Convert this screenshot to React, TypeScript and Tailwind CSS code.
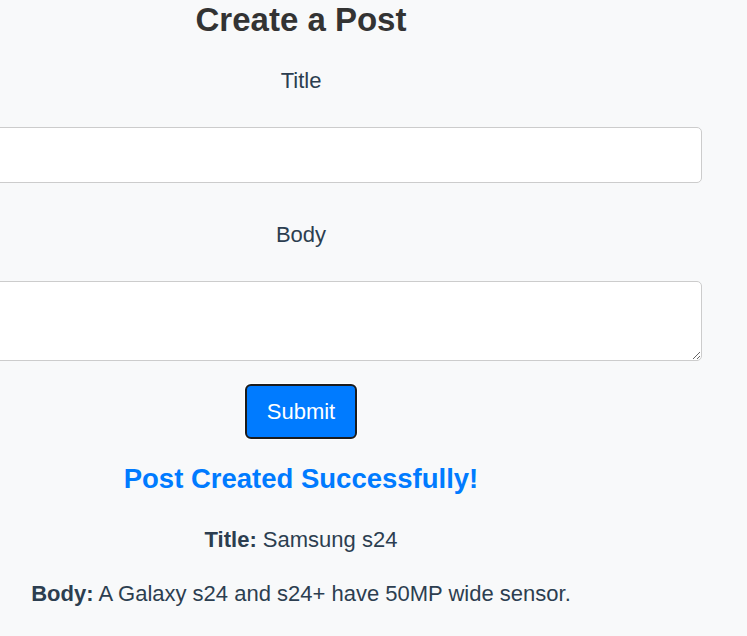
import { useState } from "react";

type Post = {
  title: string;
  body: string;
};

const submitted: Post = {
  title: "Samsung s24",
  body: "A Galaxy s24 and s24+ have 50MP wide sensor.",
};

export default function App() {
  const [title, setTitle] = useState("");
  const [body, setBody] = useState("");
  const [post] = useState<Post | null>(submitted);

  return (
    <div className="min-h-[636px] bg-[#f8f9fa] font-['Liberation_Sans',Arial,sans-serif] text-[#2c3e50] overflow-hidden">
      <div className="w-[802px] ml-[-100px] flex flex-col items-center text-center">
        <h1 className="text-[33px] leading-[40px] font-bold text-[#333]">
          Create a Post
        </h1>

        <form className="w-full flex flex-col items-center">
          <label className="mt-[27px] text-[22px] leading-[28px]">Title</label>
          <input
            value={title}
            onChange={(e) => setTitle(e.target.value)}
            className="mt-[32px] w-full h-[56px] bg-white border border-[#ccc] rounded-[5px] px-3 text-[18px] outline-none"
          />

          <label className="mt-[38px] text-[22px] leading-[28px]">Body</label>
          <textarea
            value={body}
            onChange={(e) => setBody(e.target.value)}
            className="mt-[32px] w-full h-[80px] block bg-white border border-[#ccc] rounded-[5px] px-3 py-2 text-[18px] outline-none"
          />

          <button
            type="button"
            className="mt-[23px] w-[112px] h-[55px] bg-[#007bff] text-white text-[22px] border-2 border-[#1c1c1c] rounded-[6px] shadow-[0_0_0_1px_#fff]"
          >
            Submit
          </button>
        </form>

        {post && (
          <div className="flex flex-col items-center">
            <h2 className="mt-[24px] text-[27.5px] leading-[32px] font-bold text-[#007bff]">
              Post Created Successfully!
            </h2>
            <p className="mt-[31px] text-[22px] leading-[28px]">
              <strong>Title:</strong> {post.title}
            </p>
            <p className="mt-[26px] text-[22px] leading-[28px]">
              <strong>Body:</strong> {post.body}
            </p>
          </div>
        )}
      </div>
    </div>
  );
}
